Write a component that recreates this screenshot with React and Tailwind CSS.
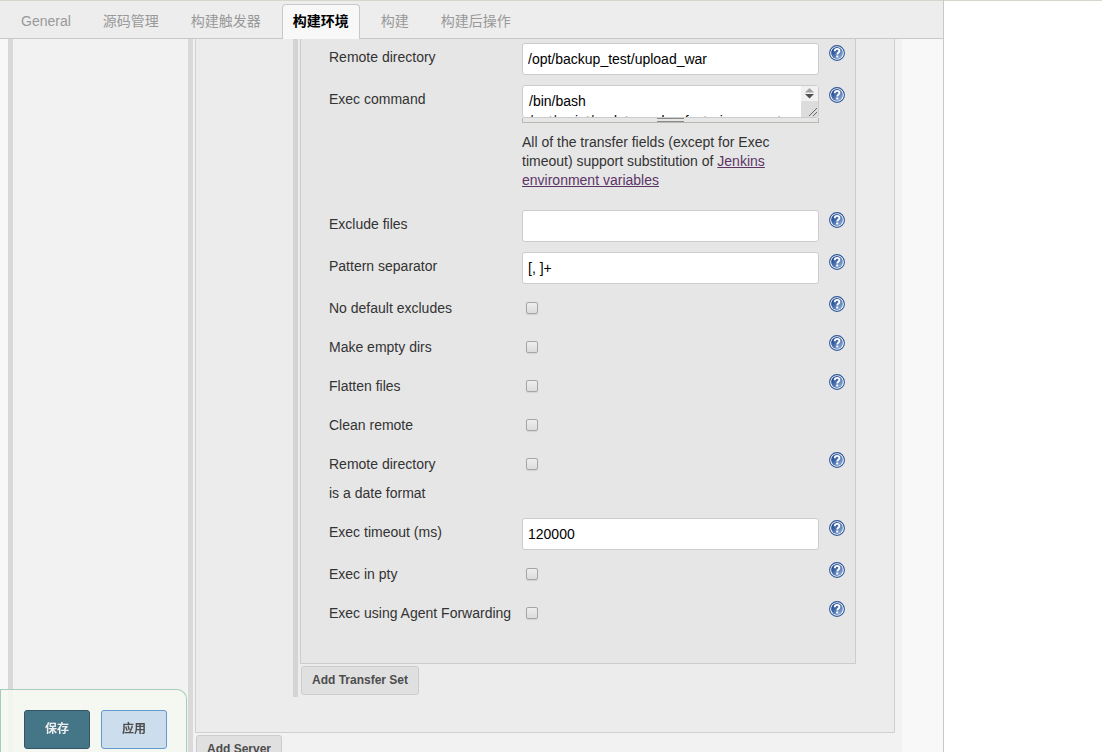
import React, { useState } from 'react';
import clsx from 'clsx';

const tabs = ['General', '源码管理', '构建触发器', '构建环境', '构建', '构建后操作'];

const execScript = '/bin/bash\n/opt/script/update_order_factoring_agent';

const HelpButton = ({ topic }) => (
  <button type="button" aria-label={`Help for feature: ${topic}`} className="mt-[2px] block h-4 w-4 cursor-pointer">
    <svg viewBox="0 0 16 16" className="h-4 w-4">
      <defs>
        <linearGradient id="helpFill" x1="0" y1="0" x2="1" y2="1">
          <stop offset="0.15" stopColor="#1a468f" />
          <stop offset="0.9" stopColor="#8cabd8" />
        </linearGradient>
      </defs>
      <circle cx="8" cy="8" r="7.4" fill="#fff" stroke="#2a5596" strokeWidth="1.1" />
      <circle cx="8" cy="8" r="5.9" fill="url(#helpFill)" />
      <path
        d="M5.700 6.300C5.700 4.700 6.700 3.900 8.100 3.900s2.300.8 2.300 2c0 1.700-2.100 1.600-2.100 3.600"
        fill="none"
        stroke="#fff"
        strokeWidth="1.9"
      />
      <rect x="7.200" y="10.500" width="2.100" height="2" fill="#fff" />
    </svg>
  </button>
);

const Row = ({ label, id, help = true, children }) => (
  <div className="flex items-start pb-[10px]">
    <label htmlFor={id} className="w-[193px] shrink-0 leading-[29px]">
      {label}
    </label>
    <div className="min-w-0 flex-1">{children}</div>
    <div className="ml-[10px] w-4 shrink-0">{help && <HelpButton topic={id} />}</div>
  </div>
);

const TextRow = ({ label, id, value }) => {
  const [text, setText] = useState(value);

  return (
    <Row label={label} id={id}>
      <input
        id={id}
        type="text"
        value={text}
        onChange={(e) => setText(e.target.value)}
        className="block h-8 w-full rounded-[3px] border border-[#ccc] bg-white px-[5px] text-black outline-none"
      />
    </Row>
  );
};

const CheckRow = ({ label, id, help }) => (
  <Row label={label} id={id} help={help}>
    <div className="flex h-7 items-center pl-1">
      <input
        id={id}
        type="checkbox"
        className="h-3 w-3 appearance-none rounded-[2px] border border-[#a6a6a6] bg-linear-to-b from-[#eee] to-[#dcdcdc] shadow-[0_1px_1px_#d2d2d2] checked:bg-[#4b758b]"
      />
    </div>
  </Row>
);

const ExecCommandRow = () => {
  const [script, setScript] = useState(execScript);

  return (
    <Row label="Exec command" id="execCommand">
      <div className="relative">
        <textarea
          id="execCommand"
          value={script}
          onChange={(e) => setScript(e.target.value)}
          className="block h-[33px] w-full resize-none overflow-hidden rounded-[3px] border border-[#ccc] bg-white px-[6px] pt-[5px] leading-[20px] whitespace-pre text-black outline-none"
        />
        {/* scrollbar and resize corner */}
        <svg viewBox="0 0 17 31" className="absolute top-px right-px h-[31px] w-[17px]">
          <rect width="17" height="15" fill="#f1f1f1" />
          <rect y="15" width="17" height="16" fill="#dcdcdc" />
          <path d="M4 6.500 8.500 2l4.500 4.500z" fill="#a3a3a3" />
          <path d="M4 8l4.500 4.500L13 8z" fill="#505050" />
          <path d="M8 30l8-8M12 30l4-4" stroke="#666" fill="none" />
        </svg>
      </div>
      <div className="flex h-[5px] justify-center border border-t-0 border-[#b9b9b0]">
        <div className="h-[4px] w-[27px] border-y border-[#8a8a8a]" />
      </div>
      <p className="max-w-[270px] pt-[10px] pb-[10px] leading-[19px]">
        All of the transfer fields (except for Exec timeout) support substitution of{' '}
        <a href="#env" className="text-[#5c3566] underline">
          Jenkins environment variables
        </a>
      </p>
    </Row>
  );
};

const AddButton = ({ children }) => (
  <button
    type="button"
    className="h-[29px] rounded-[3px] border border-[#ccc] bg-[#e0e0e0] px-[10px] pb-[2px] text-[12px] font-bold text-[#4d4d4d]"
  >
    {children}
  </button>
);

const TransferSet = () => (
  <div className="border border-t-0 border-[#ccc] bg-[#e6e6e6] pt-1 pr-[10px] pb-[25px] pl-7">
    <TextRow label="Remote directory" id="remoteDirectory" value="/opt/backup_test/upload_war" />
    <ExecCommandRow />
    <TextRow label="Exclude files" id="excludes" value="" />
    <TextRow label="Pattern separator" id="patternSeparator" value="[, ]+" />
    <CheckRow label="No default excludes" id="noDefaultExcludes" />
    <CheckRow label="Make empty dirs" id="makeEmptyDirs" />
    <CheckRow label="Flatten files" id="flatten" />
    <CheckRow label="Clean remote" id="cleanRemote" help={false} />
    <CheckRow
      label={
        <>
          Remote directory
          <br />
          is a date format
        </>
      }
      id="remoteDirectorySDF"
    />
    <TextRow label="Exec timeout (ms)" id="execTimeout" value="120000" />
    <CheckRow label="Exec in pty" id="usePty" />
    <CheckRow label="Exec using Agent Forwarding" id="useAgentForwarding" />
  </div>
);

const TabBar = ({ active, onChange }) => (
  <nav className="flex h-[39px] shrink-0 items-end gap-[10px] border-t border-b border-t-[#d6d6cf] border-b-[#c8c8c8] bg-[#ededed] pl-[10px]">
    {tabs.map((tab) => (
      <button
        key={tab}
        type="button"
        onClick={() => onChange(tab)}
        className={clsx(
          'h-[35px] rounded-t-[4px] border border-b-0 px-[10px]',
          tab === active
            ? '-mb-px border-[#c8c8c8] bg-[#f8f8f8] pb-[2px] font-bold text-black'
            : 'border-transparent text-[#999]'
        )}
      >
        {tab}
      </button>
    ))}
  </nav>
);

const SaveBar = () => (
  <div className="fixed bottom-0 left-0 flex h-[63px] gap-[11px] rounded-tr-[10px] border border-b-0 border-[#a5cdb9] bg-[#f5f9f0]/85 pt-5 pr-[19px] pl-[23px] text-[12px] font-bold">
    <button type="submit" className="h-[39px] w-[66px] rounded-[3px] border border-[#355468] bg-[#457688] pb-[2px] text-[#eee]">
      保存
    </button>
    <button type="button" className="h-[39px] w-[66px] rounded-[3px] border border-[#6299d3] bg-[#ccdded] pb-[2px] text-[#4d4d4d]">
      应用
    </button>
  </div>
);

const App = () => {
  const [active, setActive] = useState('构建环境');

  return (
    <div className="flex h-screen bg-white font-['Liberation_Sans','Noto_Sans_CJK_SC',sans-serif] text-[14px] text-[#333]">
      <form className="flex min-w-0 flex-1 flex-col border-r border-[#c8c8c8] bg-[#f8f8f8]" onSubmit={(e) => e.preventDefault()}>
        <TabBar active={active} onChange={setActive} />
        <main className="flex min-h-0 flex-1 overflow-hidden pr-[41px] pl-2">
          <div className="flex min-w-0 flex-1 border-l-[5px] border-[#d9d9d9] bg-[#f2f2f2] pl-[175px]">
            <div className="min-w-0 flex-1 border-l-[5px] border-[#d9d9d9] pr-[7px] pl-[2px]">
              <div className="border border-t-0 border-[#d0d0d0] bg-[#ececec] pr-[38px] pb-[35px] pl-[97px]">
                <div className="border-l-[5px] border-[#d4d4d4] pb-[2px] pl-[2px]">
                  <TransferSet />
                  <div className="pt-[2px] pl-px">
                    <AddButton>Add Transfer Set</AddButton>
                  </div>
                </div>
              </div>
              <div className="pt-[2px] pl-px">
                <AddButton>Add Server</AddButton>
              </div>
            </div>
          </div>
        </main>
        <SaveBar />
      </form>
      <aside className="w-[158px] shrink-0 border-t border-[#d6d6cf]" />
    </div>
  );
};

export default App;
